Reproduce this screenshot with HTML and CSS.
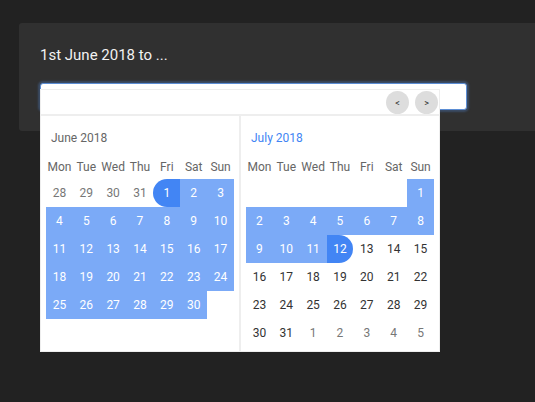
FILE: index.html
```html
<!DOCTYPE html>
<html lang="en">
<head>
    <meta charset="UTF-8">
    <meta name="viewport" content="width=device-width, initial-scale=1.0">
    <title>Date Range</title>
    <link rel="stylesheet" href="styles.css">
</head>
<body>
    <div class="card">
        <div class="label">1st June 2018 to ...</div>
        <div class="field">
            <input type="text" class="range-input">
            <div class="picker">
                <div class="picker-head">
                    <button class="nav">&lt;</button>
                    <button class="nav">&gt;</button>
                </div>
                <div class="months">
                    <div class="month">
                        <div class="month-title">June 2018</div>
                        <div class="grid weekdays">
                            <span>Mon</span><span>Tue</span><span>Wed</span><span>Thu</span><span>Fri</span><span>Sat</span><span>Sun</span>
                        </div>
                        <div class="grid days">
                            <span class="other">28</span><span class="other">29</span><span class="other">30</span><span class="other">31</span><span class="start">1</span><span class="in">2</span><span class="in">3</span>
                            <span class="in">4</span><span class="in">5</span><span class="in">6</span><span class="in">7</span><span class="in">8</span><span class="in">9</span><span class="in">10</span>
                            <span class="in">11</span><span class="in">12</span><span class="in">13</span><span class="in">14</span><span class="in">15</span><span class="in">16</span><span class="in">17</span>
                            <span class="in">18</span><span class="in">19</span><span class="in">20</span><span class="in">21</span><span class="in">22</span><span class="in">23</span><span class="in">24</span>
                            <span class="in">25</span><span class="in">26</span><span class="in">27</span><span class="in">28</span><span class="in">29</span><span class="in">30</span><span></span>
                        </div>
                    </div>
                    <div class="month">
                        <div class="month-title current">July 2018</div>
                        <div class="grid weekdays">
                            <span>Mon</span><span>Tue</span><span>Wed</span><span>Thu</span><span>Fri</span><span>Sat</span><span>Sun</span>
                        </div>
                        <div class="grid days">
                            <span></span><span></span><span></span><span></span><span></span><span></span><span class="in">1</span>
                            <span class="in">2</span><span class="in">3</span><span class="in">4</span><span class="in">5</span><span class="in">6</span><span class="in">7</span><span class="in">8</span>
                            <span class="in">9</span><span class="in">10</span><span class="in">11</span><span class="end">12</span><span>13</span><span>14</span><span>15</span>
                            <span>16</span><span>17</span><span>18</span><span>19</span><span>20</span><span>21</span><span>22</span>
                            <span>23</span><span>24</span><span>25</span><span>26</span><span>27</span><span>28</span><span>29</span>
                            <span>30</span><span>31</span><span class="other">1</span><span class="other">2</span><span class="other">3</span><span class="other">4</span><span class="other">5</span>
                        </div>
                    </div>
                </div>
            </div>
        </div>
    </div>
</body>
</html>
```

FILE: styles.css
```css
html {
    background: #222222;
}
body {
    font-family: Roboto, "Liberation Sans", sans-serif;
    background: #222222;
    margin: 0;
    padding: 23px 0 0 19px;
    height: 402px;
    box-sizing: border-box;
}
.card {
    background: #303030;
    border-radius: 3px 0 0 3px;
    padding: 22px 21px 21px;
}
.label {
    color: #f2f2f2;
    font-size: 15px;
    line-height: 20px;
    margin-bottom: 18px;
}
.field {
    position: relative;
    width: 427px;
}
.range-input {
    display: block;
    width: 100%;
    height: 27px;
    box-sizing: border-box;
    border: 1px solid #5b8dd4;
    border-radius: 3px;
    background: #fff;
    box-shadow: 0 0 2px 2px rgba(80, 130, 200, 0.35);
    outline: none;
}
.picker {
    position: absolute;
    top: 6px;
    left: 0;
    z-index: 2;
    width: 400px;
    box-sizing: border-box;
    background: #fff;
    border: 1px solid #eeeeee;
}
.picker-head {
    display: flex;
    justify-content: flex-end;
    gap: 6px;
    height: 24px;
    padding-right: 1px;
    border-bottom: 2px solid #eeeeee;
}
.nav {
    width: 23px;
    height: 23px;
    border: none;
    border-radius: 50%;
    background: #dddddd;
    color: #333;
    font-family: Roboto, "Liberation Sans", sans-serif;
    font-size: 9px;
    padding: 0;
    margin-top: 1px;
    cursor: pointer;
}
.months {
    display: flex;
}
.month {
    width: 198px;
    box-sizing: border-box;
    padding: 10px 5px 4px;
}
.month + .month {
    border-left: 2px solid #eeeeee;
}
.month-title {
    font-size: 12px;
    line-height: 24px;
    color: #666;
    padding-left: 5px;
    margin-bottom: 5px;
}
.month-title.current {
    color: #4285f4;
}
.grid {
    display: grid;
    grid-template-columns: repeat(7, 1fr);
    width: 188px;
    font-size: 12px;
    text-align: center;
}
.weekdays span {
    line-height: 24px;
    color: #666;
}
.days span {
    height: 28px;
    line-height: 28px;
    color: #333;
}
.days .other {
    color: #777;
}
.days .in {
    background: #7baaf7;
    color: #fff;
}
.days .start,
.days .end {
    background: #4285f4;
    color: #fff;
}
.days .start {
    border-radius: 14px 0 0 14px;
}
.days .end {
    border-radius: 0 14px 14px 0;
}
```
